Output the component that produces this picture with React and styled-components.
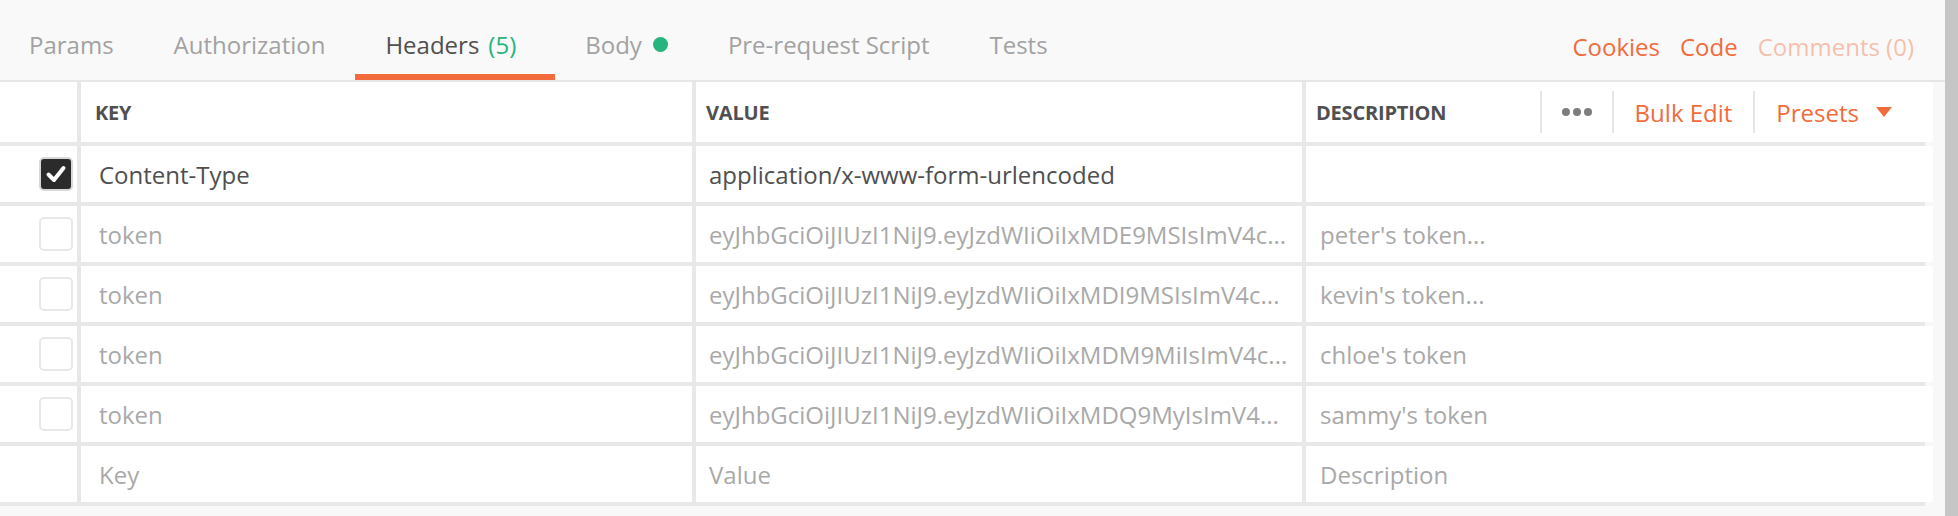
import React from 'react';
import styled, {createGlobalStyle} from 'styled-components';

const GlobalStyle = createGlobalStyle`
  html, body {
    margin: 0;
    padding: 0;
    background: #f8f8f8;
  }
  body {
    font-family: "Open Sans", "Liberation Sans", sans-serif;
  }
`;

const tabs = [
  {label: 'Params'},
  {label: 'Authorization'},
  {label: 'Headers', count: 5, active: true},
  {label: 'Body', dot: true},
  {label: 'Pre-request Script'},
  {label: 'Tests'},
];

const rows = [
  {checked: true, key: 'Content-Type', value: 'application/x-www-form-urlencoded', desc: ''},
  {key: 'token', value: 'eyJhbGciOiJIUzI1NiJ9.eyJzdWIiOiIxMDE9MSIsImV4c...', desc: "peter's token..."},
  {key: 'token', value: 'eyJhbGciOiJIUzI1NiJ9.eyJzdWIiOiIxMDI9MSIsImV4c...', desc: "kevin's token..."},
  {key: 'token', value: 'eyJhbGciOiJIUzI1NiJ9.eyJzdWIiOiIxMDM9MiIsImV4c...', desc: "chloe's token"},
  {key: 'token', value: 'eyJhbGciOiJIUzI1NiJ9.eyJzdWIiOiIxMDQ9MyIsImV4...', desc: "sammy's token"},
];

const Checkbox = ({checked}) => (
  <Box checked={checked}>
    {checked && (
      <svg width="24" height="24" viewBox="0 0 24 24">
        <path d="M4.5 12.5 L10 18 L19.5 6" fill="none" stroke="#fff" strokeWidth="4" strokeLinecap="round" strokeLinejoin="round"/>
      </svg>
    )}
  </Box>
);

export default function App() {
  return (
    <>
      <GlobalStyle/>
      <Page>
        <Main>
          <TabBar>
            <Tabs>
              {tabs.map(t => (
                <Tab key={t.label} active={t.active}>
                  {t.label}
                  {t.count !== undefined && <Count>({t.count})</Count>}
                  {t.dot && <Dot/>}
                </Tab>
              ))}
            </Tabs>
            <Links>
              <Link>Cookies</Link>
              <Link>Code</Link>
              <Link faded>Comments (0)</Link>
            </Links>
          </TabBar>

          <Table>
            <HeadCell/>
            <HeadCell pad={14}>KEY</HeadCell>
            <HeadCell pad={10}>VALUE</HeadCell>
            <HeadCell pad={10}>
              <HeadLabel>DESCRIPTION</HeadLabel>
              <Actions>
                <Action narrow><More><i/><i/><i/></More></Action>
                <Action>Bulk Edit</Action>
                <Action>Presets<Caret/></Action>
              </Actions>
            </HeadCell>

            {rows.map((r, i) => (
              <React.Fragment key={i}>
                <CheckCell><Checkbox checked={r.checked}/></CheckCell>
                <Cell pad={18} muted={!r.checked}>{r.key}</Cell>
                <Cell pad={13} muted={!r.checked}>{r.value}</Cell>
                <Cell pad={14} muted={!r.checked}>{r.desc}</Cell>
              </React.Fragment>
            ))}

            <CheckCell/>
            <Cell pad={18} muted>Key</Cell>
            <Cell pad={13} muted>Value</Cell>
            <Cell pad={14} muted>Description</Cell>
          </Table>
        </Main>
        <ScrollTrack/>
      </Page>
    </>
  );
}

const Page = styled.div`
  display: flex;
  width: 1958px;
  height: 516px;
  overflow: hidden;
`;

const Main = styled.div`
  flex: 1;
  display: flex;
  flex-direction: column;
`;

const ScrollTrack = styled.div`
  width: 13px;
  background: #c6c6c6;
`;

const TabBar = styled.div`
  display: flex;
  align-items: stretch;
  justify-content: space-between;
  height: 80px;
  background: #f9f9f9;
  border-bottom: 2px solid #e6e6e6;
`;

const Tabs = styled.div`
  display: flex;
`;

const Tab = styled.div`
  display: flex;
  align-items: center;
  padding: 14px 30px 0 30px;
  font-size: 24px;
  color: ${p => p.active ? '#4f4f4f' : '#a2a2a2'};
  border-bottom: 6px solid ${p => p.active ? '#f26b3a' : 'transparent'};
  white-space: nowrap;
  &:first-child {
    padding-left: 29px;
  }
`;

const Count = styled.span`
  color: #26b47f;
  margin-left: 9px;
  margin-right: 9px;
`;

const Dot = styled.span`
  width: 15px;
  height: 15px;
  border-radius: 50%;
  background: #26b47f;
  margin-left: 11px;
`;

const Links = styled.div`
  display: flex;
  align-items: center;
  gap: 20px;
  padding: 12px 31px 0 0;
`;

const Link = styled.span`
  font-size: 24px;
  color: #f26b3a;
  opacity: ${p => p.faded ? 0.4 : 1};
`;

const Table = styled.div`
  display: grid;
  grid-template-columns: 77px 611px 606px 627px;
  grid-template-rows: 60px repeat(6, 56px);
  gap: 4px;
  width: 1921px;
  padding: 0 4px 4px 0;
  background: #e8e8e8;
`;

const HeadCell = styled.div`
  display: flex;
  align-items: center;
  background: #fff;
  padding-left: ${p => p.pad || 0}px;
  font-size: 20px;
  font-weight: 700;
  color: #505050;
  letter-spacing: -0.2px;
`;

const HeadLabel = styled.span`
  flex: 1;
`;

const Actions = styled.div`
  display: flex;
  align-items: center;
  padding-right: 20px;
`;

const Action = styled.div`
  display: flex;
  align-items: center;
  height: 42px;
  padding: 0 ${p => p.narrow ? 20 : 21}px;
  border-left: 2px solid #e6e6e6;
  font-size: 24px;
  font-weight: 400;
  color: #f26b3a;
  letter-spacing: 0;
`;

const More = styled.span`
  display: flex;
  gap: 3px;
  i {
    width: 8px;
    height: 8px;
    border-radius: 50%;
    background: #7d7d7d;
  }
`;

const Caret = styled.span`
  width: 0;
  height: 0;
  margin-left: 17px;
  border-left: 8px solid transparent;
  border-right: 8px solid transparent;
  border-top: 10px solid #f26b3a;
`;

const CheckCell = styled.div`
  display: flex;
  align-items: center;
  justify-content: flex-end;
  padding-right: 4px;
  background: #fff;
`;

const Box = styled.div`
  display: flex;
  align-items: center;
  justify-content: center;
  box-sizing: border-box;
  width: 34px;
  height: 34px;
  border-radius: 5px;
  border: 2px solid ${p => p.checked ? '#d8d8d8' : '#e8e8e8'};
  background: ${p => p.checked ? '#2b2b2b' : '#fff'};
`;

const Cell = styled.div`
  display: flex;
  align-items: center;
  min-width: 0;
  background: #fff;
  padding: 0 6px 0 ${p => p.pad}px;
  font-size: 24px;
  color: ${p => p.muted ? '#a9a9a9' : '#4f4f4f'};
  white-space: nowrap;
  overflow: hidden;
  text-overflow: ellipsis;
`;
